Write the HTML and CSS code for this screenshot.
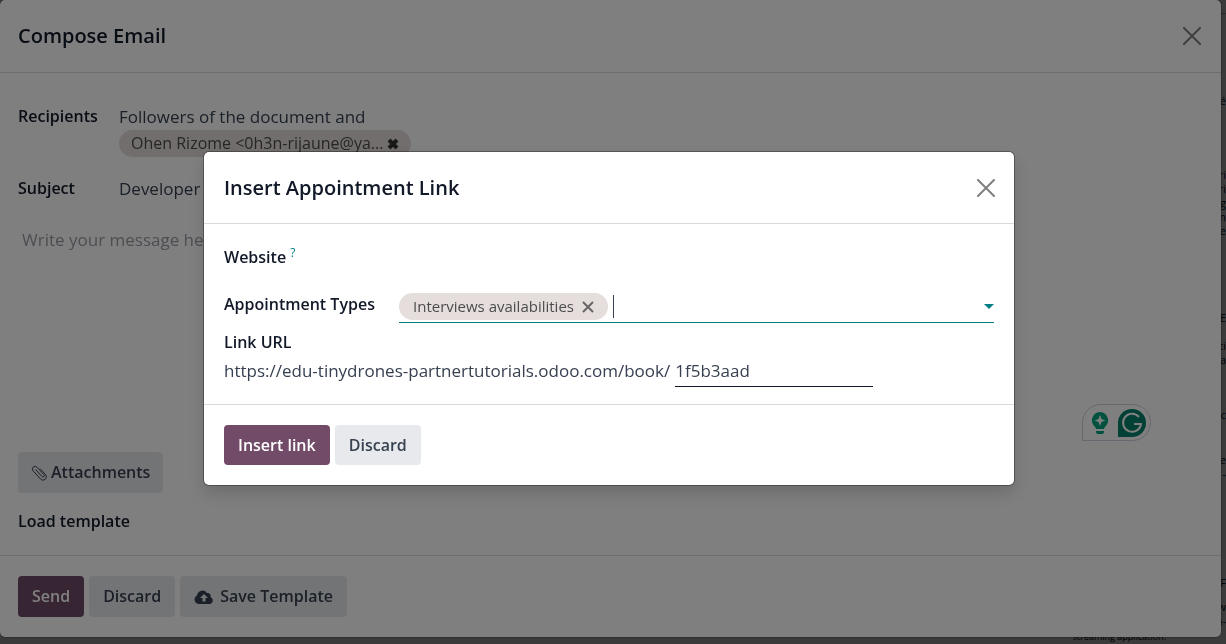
FILE: index.html
```html
<!DOCTYPE html>
<html lang="en">
<head>
  <meta charset="UTF-8">
  <meta name="viewport" content="width=device-width, initial-scale=1.0">
  <title>Compose Email</title>
  <link rel="stylesheet" href="styles.css">
</head>
<body>
  <!-- Job page behind the dialogs -->
  <div class="page">
    <div class="page-top"></div>
    <div class="page-text">
      <p class="intro">é</p>
      <p class="about">ri<br>ri<br>ag<br>m<br>e</p>
      <p class="tasks">E<br>&nbsp;<br>ti<br>a</p>
      <p class="skills">.c</p>
      <p class="offer">de<br>n -</p>
      <p class="perks">F</p>
      <p class="more">w<br>n-</p>
    </div>
    <p class="page-last">streaming application.</p>
  </div>

  <section class="compose">
    <header class="modal-header">
      <h2>Compose Email</h2>
      <button type="button" class="close" aria-label="Close">
        <svg viewBox="0 0 18 18"><path d="M1 1l16 16M17 1L1 17"/></svg>
      </button>
    </header>
    <form class="compose-body">
      <div class="compose-fields">
        <span class="label">Recipients</span>
        <div class="recipients">
          <span>Followers of the document and</span>
          <span class="tag">
            Ohen Rizome &lt;0h3n-rijaune@ya...
            <button type="button" class="tag-remove" aria-label="Remove">
              <svg class="icon-bold-x" viewBox="0 0 12 12"><path d="M2 2l8 8M10 2l-8 8"/></svg>
            </button>
          </span>
        </div>
        <label for="subject">Subject</label>
        <input type="text" id="subject" value="Developer Ohen Rizome">
      </div>
      <textarea class="message" aria-label="Message" placeholder="Write your message here..."></textarea>
      <div>
        <button type="button" class="btn btn-light btn-attach">
          <svg class="icon-clip" viewBox="0 0 16 16"><path d="M4.500 4.500l6.500 7a1.300 1.300 0 0 0 2-1.700L6 2.300A2.600 2.600 0 0 0 2 5.800l7.500 8.200a3.300 3.300 0 0 0 5-4.400L9 3.500"/></svg>
          Attachments
        </button>
      </div>
      <div class="label template">Load template</div>
    </form>
    <footer class="modal-footer">
      <button type="button" class="btn btn-primary">Send</button>
      <button type="button" class="btn btn-light">Discard</button>
      <button type="button" class="btn btn-light">
        <svg class="icon-cloud" viewBox="0 0 20 16"><path fill-rule="evenodd" d="M5 15a4.500 4.500 0 0 1-2-8.500A5.500 5.500 0 0 1 13 4a3 3 0 0 1 3.500 4A3.700 3.700 0 0 1 16 15zM10 5L6 9h2.500v3.500h3V9H14z"/></svg>
        Save Template
      </button>
    </footer>
    <div class="assistant">
      <svg class="icon-bulb" viewBox="0 0 18 24"><path fill="#00a37b" d="M9 1a8.500 8.500 0 0 0-5 15q1 1 1 2h8q0-1 1-2A8.500 8.500 0 0 0 9 1z"/><path fill="#fff" d="M9 4l1.500 4L14.500 9.500l-4 1.500L9 15l-1.500-4-4-1.500 4-1.500z"/><path fill="#00a37b" d="M5 20h8v1a2 2 0 0 1-2 2H7a2 2 0 0 1-2-2z"/></svg>
      <svg class="icon-g" viewBox="0 0 28 28"><path fill="#00806a" d="M14 0a14 14 0 0 1 0 28H0V14A14 14 0 0 1 14 0z"/><path fill="none" stroke="#fff" stroke-width="2" d="M21 8a9 9 0 1 0 2 7h-7"/></svg>
    </div>
  </section>

  <div class="backdrop">
    <section class="dialog" role="dialog" aria-labelledby="dialog-title">
      <header class="modal-header">
        <h2 id="dialog-title">Insert Appointment Link</h2>
        <button type="button" class="close" aria-label="Close">
          <svg viewBox="0 0 18 18"><path d="M1 1l16 16M17 1L1 17"/></svg>
        </button>
      </header>
      <form class="dialog-body">
        <div class="label">Website <sup>?</sup></div>
        <div class="types-row">
          <label for="types">Appointment Types</label>
          <div class="types">
            <span class="tag">
              Interviews availabilities
              <button type="button" class="tag-remove" aria-label="Remove">
                <svg class="icon-x" viewBox="0 0 12 12"><path d="M1 1l10 10M11 1L1 11"/></svg>
              </button>
            </span>
            <span class="caret"></span>
            <input type="text" id="types">
            <span class="arrow"></span>
          </div>
        </div>
        <label for="url" class="url-label">Link URL</label>
        <div class="url-row">
          <span>https://edu-tinydrones-partnertutorials.odoo.com/book/</span>
          <input type="text" id="url" value="1f5b3aad">
        </div>
      </form>
      <footer class="modal-footer">
        <button type="button" class="btn btn-primary">Insert link</button>
        <button type="button" class="btn btn-light">Discard</button>
      </footer>
    </section>
  </div>
</body>
</html>
```
FILE: styles.css
```css
* {
  box-sizing: border-box;
}
body {
  margin: 0;
  font-family: "Open Sans", "Noto Sans", sans-serif;
  font-size: 17px;
  line-height: 27px;
  color: #374151;
  overflow: hidden;
}
h2 {
  margin: 0;
  font-size: 20px;
  font-weight: 600;
  line-height: 30px;
  color: #111827;
}
button, input, textarea {
  font: inherit;
  color: inherit;
  background: none;
  border: 0;
  padding: 0;
  margin: 0;
  outline: 0;
}
svg {
  display: block;
}
label, .label {
  font-size: 16px;
  font-weight: 600;
  color: #111827;
}

/* page behind */
.page {
  display: flex;
  flex-direction: column;
  height: 100vh;
  background: #777;
  color: #000;
  font-size: 11px;
  line-height: 14px;
  overflow: hidden;
}
.page p {
  margin: 0;
}
.page-top {
  height: 14px;
  border-bottom: 1px solid #555;
}
.page-text {
  flex: 1;
  padding-top: 80px;
  text-align: right;
}
.page .about {
  margin-top: 60px;
}
.page .tasks {
  margin-top: 73px;
}
.page .skills {
  margin-top: 41px;
}
.page .offer {
  margin-top: 31px;
}
.page .perks {
  margin-top: 95px;
}
.page .more {
  margin-top: 10px;
}
.page-last {
  align-self: flex-end;
  padding-right: 60px;
  font-size: 9px;
}

/* modals */
.modal-header {
  display: flex;
  align-items: center;
  justify-content: space-between;
  padding: 21px 19px 20px 20px;
  border-bottom: 1px solid #d8dadd;
}
.close svg {
  width: 18px;
  height: 18px;
  fill: none;
  stroke: #7f7f7f;
  stroke-width: 2;
  stroke-linecap: round;
}
.modal-footer {
  display: flex;
  gap: 5px;
  padding: 20px;
  border-top: 1px solid #d8dadd;
}
.btn {
  display: inline-flex;
  align-items: center;
  gap: 6px;
  height: 40px;
  padding: 0 14px;
  border-radius: 4px;
  font-size: 16px;
  font-weight: 600;
}
.btn-primary {
  background: #714b67;
  color: #fff;
}
.btn-light {
  background: #e7e9ed;
}
.btn-attach {
  gap: 4px;
  padding: 0 13px;
}
.tag {
  display: inline-flex;
  align-items: center;
  gap: 8px;
  height: 27px;
  padding: 0 14px;
  border-radius: 14px;
  background: #e6dddd;
  font-size: 15px;
  color: #4c4c4c;
  white-space: nowrap;
}
.tag svg {
  width: 12px;
  height: 12px;
  fill: none;
  stroke: #666;
  stroke-width: 2;
}
.tag .icon-bold-x {
  stroke: #333;
  stroke-width: 4;
}

.compose {
  position: fixed;
  inset: 0 5px 7px 0;
  display: flex;
  flex-direction: column;
  background: #fff;
  border-radius: 5px;
  box-shadow: 0 0 2px #333;
}
.compose .modal-header {
  padding: 21px 20px 21px 18px;
}
.compose .modal-footer {
  padding-left: 18px;
}
.compose .btn {
  height: 41px;
}
.compose-body {
  flex: 1;
  display: flex;
  flex-direction: column;
  padding: 30px 18px 20px;
}
.compose-fields {
  display: grid;
  grid-template-columns: 81px 1fr;
  column-gap: 20px;
  row-gap: 18px;
}
.recipients {
  display: flex;
  flex-direction: column;
  align-items: flex-start;
}
.recipients .tag {
  gap: 4px;
  padding: 0 12px;
  font-size: 16px;
}
.message {
  flex: 1;
  margin-top: 24px;
  padding: 0 4px;
  resize: none;
}
.message::placeholder {
  color: #9a9ca5;
  opacity: 1;
}
.template {
  margin-top: 15px;
}
.icon-clip {
  width: 16px;
  height: 16px;
  fill: none;
  stroke: #374151;
}
.icon-cloud {
  width: 20px;
  height: 16px;
  fill: #374151;
}
.assistant {
  position: absolute;
  right: 70px;
  bottom: 196px;
  display: flex;
  align-items: center;
  gap: 9px;
  height: 37px;
  padding: 0 4px 0 8px;
  border: 1px solid #cfcfe0;
  border-radius: 19px 19px 19px 0;
}
.icon-bulb {
  width: 18px;
  height: 24px;
}
.icon-g {
  width: 28px;
  height: 28px;
}

.backdrop {
  position: fixed;
  inset: 0;
  display: flex;
  justify-content: center;
  align-items: flex-start;
  padding: 152px 8px 0 0;
  background: rgba(0, 0, 0, 0.5);
}
.dialog {
  width: 100%;
  max-width: 810px;
  background: #fff;
  border-radius: 5px;
  box-shadow: 0 0 0 1px rgba(0, 0, 0, 0.3), 0 8px 16px rgba(0, 0, 0, 0.15);
}
.dialog-body {
  padding: 20px 20px 17px;
}
.dialog sup {
  font-size: 12px;
  font-weight: 400;
  line-height: 0;
  color: #017e84;
}
.types-row {
  display: grid;
  grid-template-columns: 156px 1fr;
  column-gap: 19px;
  margin-top: 20px;
}
.types {
  display: flex;
  align-items: center;
  gap: 5px;
  height: 32px;
  border-bottom: 1px solid #017e84;
}
.types input {
  flex: 1;
  min-width: 0;
}
.caret {
  width: 1px;
  height: 23px;
  background: #374151;
}
.arrow {
  border: 5px solid transparent;
  border-top-color: #017e84;
  border-bottom: 0;
}
.url-label {
  display: block;
  margin-top: 6px;
}
.url-row {
  display: flex;
  gap: 5px;
  margin-top: 1px;
}
.url-row input {
  width: 198px;
  height: 30px;
  padding-bottom: 2px;
  border-bottom: 1px solid #111827;
}
```
